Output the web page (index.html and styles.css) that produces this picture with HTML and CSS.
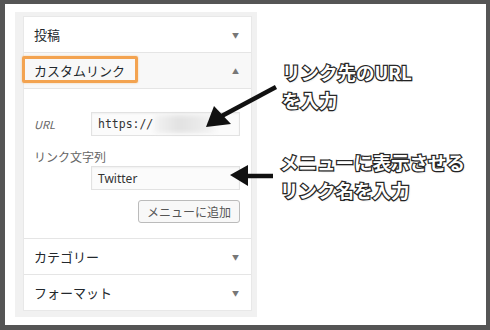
FILE: index.html
```html
<!DOCTYPE html>
<html lang="ja">
<head>
    <meta charset="UTF-8">
    <meta name="viewport" content="width=device-width, initial-scale=1.0">
    <title>カスタムリンク</title>
    <link rel="stylesheet" href="styles.css">
</head>
<body>
    <div class="frame">
        <div class="panel">
            <div class="box">
                <div class="row">
                    <span>投稿</span>
                    <span class="caret">&#9660;</span>
                </div>
                <div class="row open">
                    <span>カスタムリンク</span>
                    <span class="caret up">&#9650;</span>
                    <div class="mark"></div>
                </div>
                <div class="links">
                    <div class="field url">
                        <label>URL</label>
                        <div class="input mono">https:/<span class="slash">/</span><span class="blur"></span></div>
                    </div>
                    <label class="name-label">リンク文字列</label>
                    <div class="field">
                        <div class="input">Twitter</div>
                    </div>
                    <div class="actions">
                        <button class="add">メニューに追加</button>
                    </div>
                </div>
                <div class="row">
                    <span>カテゴリー</span>
                    <span class="caret">&#9660;</span>
                </div>
                <div class="row last">
                    <span>フォーマット</span>
                    <span class="caret">&#9660;</span>
                </div>
            </div>
        </div>

        <!-- annotations -->
        <svg class="arrows" width="481" height="321" viewBox="5 4 481 321">
            <line x1="276" y1="87" x2="218" y2="118" stroke="#111" stroke-width="4.5"/>
            <polygon points="206,127 214,106 231,124" fill="#111"/>
            <line x1="273" y1="176" x2="244" y2="176" stroke="#111" stroke-width="4.5"/>
            <polygon points="230,175 248,165 248,186" fill="#111"/>
        </svg>
        <div class="note note-url">リンク先のURL<br>を入力</div>
        <div class="note note-name">メニューに表示させる<br>リンク名を入力</div>
    </div>
</body>
</html>
```

FILE: styles.css
```css
body {
    margin: 0;
    background: #555;
    font-family: "Noto Sans CJK JP", "Noto Sans", sans-serif;
}
.frame {
    position: relative;
    margin: 4px 4px 0 5px;
    width: 481px;
    height: 321px;
    background: #fff;
    overflow: hidden;
}
.panel {
    position: absolute;
    left: 10px;
    top: 8px;
    width: 229px;
    padding: 4px 5px 6px 8px;
    background: #f1f1f1;
}
.box {
    background: #fff;
    border: 1px solid #e8e8e8;
}
.row {
    position: relative;
    display: flex;
    justify-content: space-between;
    align-items: center;
    height: 35px;
    padding: 0 12px 0 10px;
    border-bottom: 1px solid #e5e5e5;
    font-size: 13px;
    color: #23282d;
}
.row.open {
    background: #f8f8f8;
}
.row.last {
    border-bottom: none;
}
.caret {
    font-size: 7px;
    color: #777;
}
.mark {
    position: absolute;
    left: -2px;
    top: 3px;
    width: 110px;
    height: 21px;
    border: 3px solid #f3a350;
    border-radius: 2px;
    box-shadow: 0 0 2px rgba(243, 163, 80, 0.6);
}
.links {
    padding: 23px 11px 15px 10px;
    border-bottom: 1px solid #e5e5e5;
}
.field {
    display: flex;
    align-items: center;
    justify-content: flex-end;
}
.field label {
    flex: 1;
    font-size: 11px;
    font-style: italic;
    color: #666;
}
.input {
    box-sizing: border-box;
    width: 149px;
    height: 24px;
    padding: 0 6px;
    display: flex;
    align-items: center;
    border: 1px solid #e2e2e2;
    background: #fbfbfb;
    box-shadow: inset 0 1px 2px rgba(0, 0, 0, 0.05);
    font-size: 12px;
    color: #333;
    font-family: "Noto Sans", sans-serif;
}
.input.mono {
    font-family: "DejaVu Sans Mono", monospace;
    font-size: 11.5px;
}
.slash {
    font-style: italic;
}
.blur {
    display: inline-block;
    width: 60px;
    height: 18px;
    margin-left: 2px;
    background: linear-gradient(90deg, #f2f2f2, #e2e2e2 40%, #e9e9e9 70%, #f4f4f4);
    filter: blur(2px);
}
.name-label {
    display: block;
    margin: 12px 0 1px;
    font-size: 12px;
    color: #666;
}
.actions {
    display: flex;
    justify-content: flex-end;
    margin-top: 10px;
}
.add {
    height: 23px;
    padding: 0 8px;
    border: 1px solid #bbb;
    border-radius: 3px;
    background: #f8f8f8;
    font-family: "Noto Sans CJK JP", sans-serif;
    font-size: 12px;
    color: #555;
}
.arrows {
    position: absolute;
    left: 0;
    top: 0;
}
.note {
    position: absolute;
    font-size: 18.5px;
    font-weight: bold;
    line-height: 28px;
    color: #fff;
    -webkit-text-stroke: 2.5px #2a2a2a;
    paint-order: stroke fill;
    text-shadow: 1px 1px 2px rgba(0, 0, 0, 0.25);
    white-space: nowrap;
}
.note-url {
    left: 277px;
    top: 54px;
}
.note-name {
    left: 275px;
    top: 144px;
}
```
